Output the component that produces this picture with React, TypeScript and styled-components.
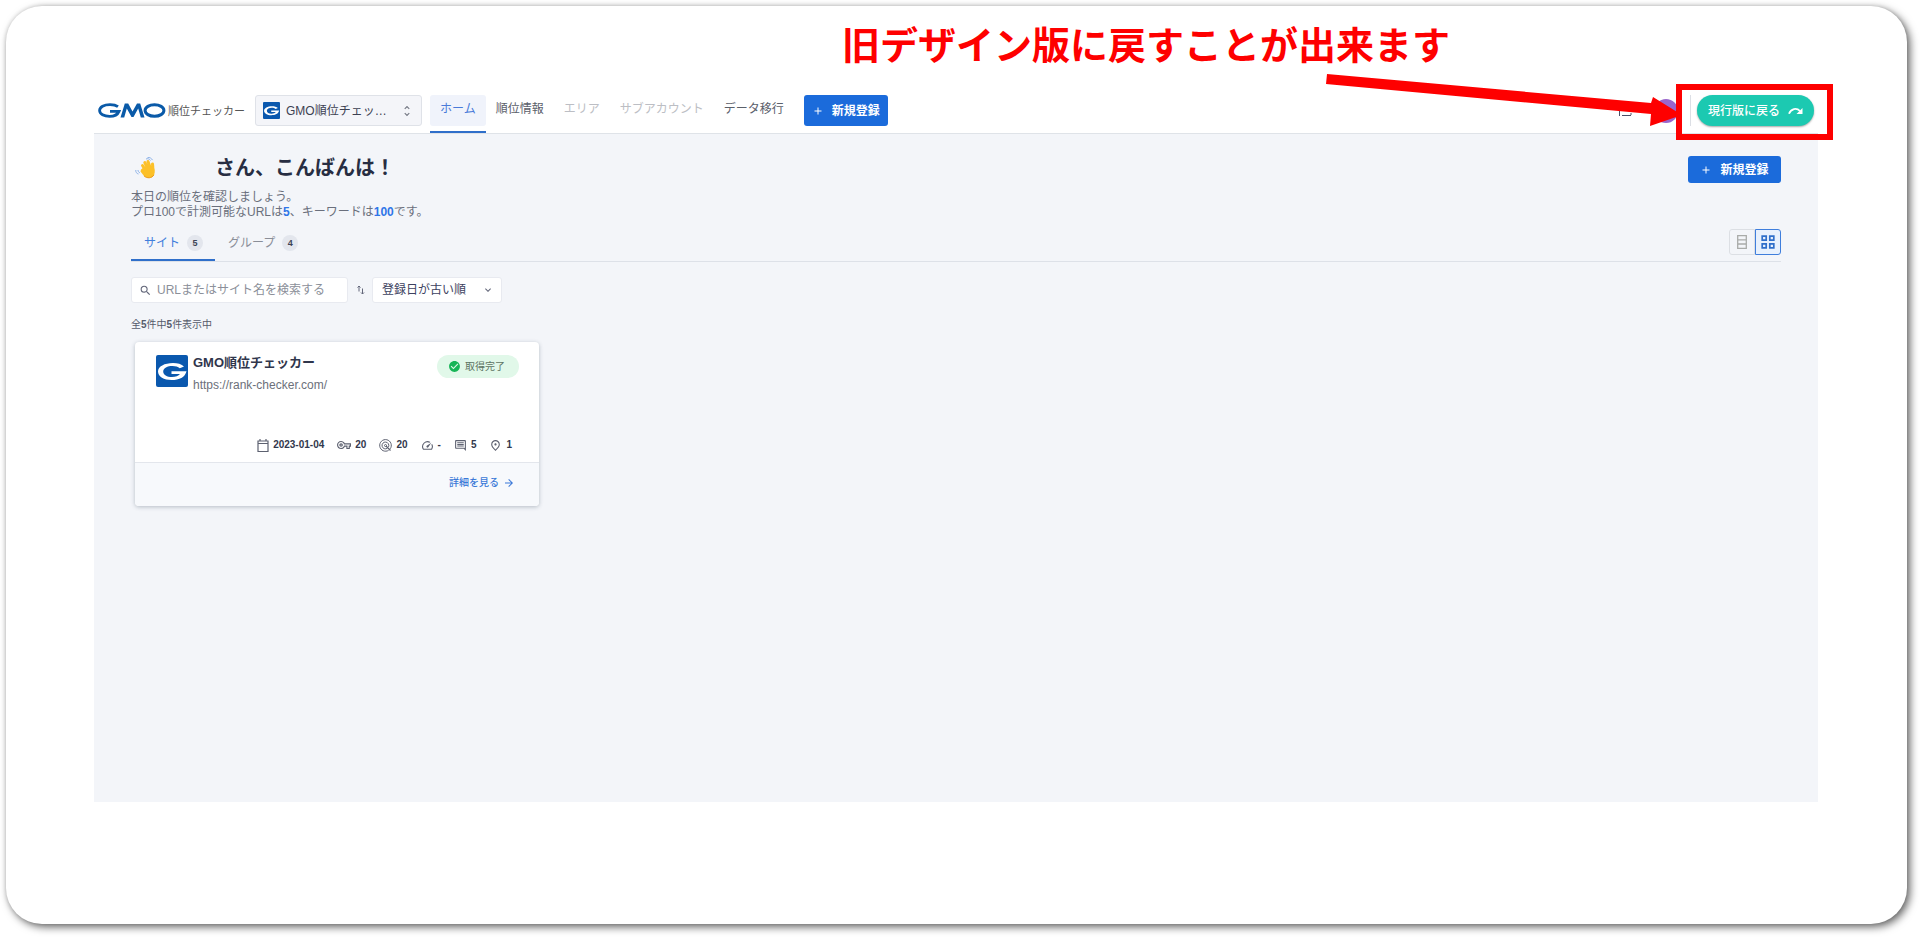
import React from "react";
import styled, { createGlobalStyle } from "styled-components";
import {
  MdSearch, MdUnfoldMore, MdOutlineVpnKey, MdOutlineSpeed, MdOutlineComment, MdOutlinePlace,
  MdExpandMore, MdArrowForward, MdAdd, MdCheckCircle,
} from "react-icons/md";

const Global = createGlobalStyle`
  *, *::before, *::after { box-sizing: border-box; }
  body {
    margin: 0;
    background: #fff;
    color: #2b3147;
    font: 12px/16px "Liberation Sans", "Noto Sans CJK JP", sans-serif;
  }
  button, input, select { font: inherit; }
  h1, h2, p, ul { margin: 0; padding: 0; }
  a { text-decoration: none; color: inherit; }
`;

const Slide = styled.div`
  display: flex;
  flex-direction: column;
  min-height: calc(100vh - 20px);
  margin: 6px 13px 14px 6px;
  padding: 0 89px 122px 88px;
  border-radius: 36px;
  background: #fff;
  box-shadow: 3px 3px 8px rgba(0, 0, 0, 0.6), 0 0 4px rgba(0, 0, 0, 0.12);
  overflow: hidden;
`;

const Caption = styled.p`
  margin: 12px 0 20px 748px;
  color: #fe0000;
  font-size: 38px;
  line-height: 56px;
  font-weight: 700;
  white-space: nowrap;
`;

const Header = styled.header`
  display: flex;
  align-items: flex-start;
  height: 40px;
  padding: 1px 4px 0;
  border-bottom: 1px solid #dfe3e8;
`;

const Brand = styled.a`
  display: flex;
  align-items: center;
  flex: none;
  gap: 2px;
  height: 31px;
  width: 149px;
  margin-right: 8px;
  color: #555;
  font-size: 11px;
  white-space: nowrap;
  svg { flex: none; }
`;

const SiteSelect = styled.button`
  display: flex;
  align-items: center;
  gap: 6px;
  width: 167px;
  height: 31px;
  margin-right: 8px;
  padding: 0 7px;
  border: 1px solid #dfe2e8;
  border-radius: 3px;
  background: #f4f5f9;
  color: #3c4152;
  svg:last-child { margin-left: auto; }
`;

const Nav = styled.nav`
  display: flex;
  align-self: stretch;
  margin-right: 10px;
`;

const NavLink = styled.a<{ $tone?: "active" | "muted" }>`
  height: 38px;
  border-bottom: 2px solid ${(p) => (p.$tone === "active" ? "#2f6fca" : "transparent")};
  white-space: nowrap;
  color: ${(p) => (p.$tone === "active" ? "#4a7bd9" : p.$tone === "muted" ? "#bcbec4" : "#5b606a")};

  span {
    display: block;
    height: 31px;
    padding: 6px 10px;
    border-radius: 3px;
    background: ${(p) => (p.$tone === "active" ? "#f0f3fb" : "transparent")};
  }
`;

const PrimaryButton = styled.button<{ $wide?: boolean }>`
  display: flex;
  align-items: center;
  justify-content: center;
  gap: 8px;
  flex: none;
  width: ${(p) => (p.$wide ? 93 : 84)}px;
  height: ${(p) => (p.$wide ? 27 : 31)}px;
  padding: 0;
  border: 0;
  border-radius: 3px;
  background: #1b6bdb;
  color: #fff;
  font-weight: 700;
`;

const Account = styled.div`
  display: flex;
  align-items: center;
  gap: 20px;
  height: 31px;
  margin-left: auto;
  color: #4b5068;
`;

const Avatar = styled.span`
  width: 24px;
  height: 24px;
  border-radius: 50%;
  background: #9966cc;
`;

const ReturnArea = styled.div`
  position: relative;
  margin-left: 12px;
  padding-left: 6px;
  border-left: 1px solid #dcdfe5;
`;

const ReturnButton = styled.button`
  display: flex;
  align-items: center;
  justify-content: center;
  gap: 8px;
  width: 117px;
  height: 31px;
  padding: 0;
  border: 0;
  border-radius: 16px;
  background: #1cc9b1;
  color: #fff;
  font-weight: 500;
  box-shadow: 0 1px 2px rgba(0, 0, 0, 0.35);
`;

const Highlight = styled.div`
  position: absolute;
  inset: -11px -19px -14px -15px;
  border: 6px solid #fe0000;
  pointer-events: none;
`;

const Pointer = styled.svg`
  position: absolute;
  right: 132px;
  top: -23px;
  pointer-events: none;
`;

const Main = styled.main`
  flex: 1;
  padding: 22px 37px 40px;
  background: #f3f5f9;
`;

const Intro = styled.div`
  display: flex;
  justify-content: space-between;
  align-items: flex-start;
`;

const Greeting = styled.h1`
  display: flex;
  align-items: center;
  gap: 58px;
  height: 24px;
  margin-bottom: 10px;
  padding-left: 4px;
  color: #272d42;
  font-size: 20px;
  line-height: 24px;
`;

const Lead = styled.p`
  color: #6a6f7c;
  line-height: 15px;
  b { color: #2f76e8; }
`;

const TabBar = styled.div`
  display: flex;
  align-items: flex-end;
  justify-content: space-between;
  height: 42px;
  margin-bottom: 15px;
  border-bottom: 1px solid #dde1e8;
`;

const Tabs = styled.div`
  display: flex;
  align-self: stretch;
  align-items: flex-end;
`;

const Tab = styled.button<{ $active?: boolean }>`
  display: flex;
  align-items: center;
  gap: 7px;
  height: 34px;
  padding: 0 12px 0 13px;
  border: 0;
  border-bottom: 2px solid ${(p) => (p.$active ? "#2f6fca" : "transparent")};
  background: none;
  color: ${(p) => (p.$active ? "#3f7edc" : "#8a8e98")};
`;

const Count = styled.span`
  width: 16px;
  border-radius: 8px;
  background: #e3e6ed;
  color: #3d4354;
  font-size: 9px;
  font-weight: 700;
  text-align: center;
`;

const Toggle = styled.div`
  display: flex;
  margin-bottom: 6px;
`;

const ToggleButton = styled.button<{ $active?: boolean }>`
  display: grid;
  place-items: center;
  width: 26px;
  height: 26px;
  padding: 0;
  border: 1px solid ${(p) => (p.$active ? "#3f7edc" : "#dcdfe4")};
  border-radius: ${(p) => (p.$active ? "0 3px 3px 0" : "3px 0 0 3px")};
  background: ${(p) => (p.$active ? "#e8f1fd" : "transparent")};
  color: ${(p) => (p.$active ? "#2f6fca" : "#a9aba9")};
`;

const Filters = styled.form`
  display: flex;
  align-items: center;
  margin-bottom: 14px;
  color: #63677a;
`;

const Field = styled.label<{ $width: number }>`
  display: flex;
  align-items: center;
  gap: 5px;
  width: ${(p) => p.$width}px;
  height: 26px;
  padding: 0 7px;
  border: 1px solid #e8eaf0;
  border-radius: 3px;
  background: #fff;
  svg { flex: none; }
`;

const SearchInput = styled.input`
  flex: 1;
  min-width: 0;
  padding: 0;
  border: 0;
  outline: 0;
  background: none;
  &::placeholder { color: #8b8f99; opacity: 1; }
`;

const SortIcon = styled.svg`
  margin: 0 7px 0 9px;
`;

const SortSelect = styled.select`
  flex: 1;
  min-width: 0;
  border: 0;
  padding: 0 2px;
  appearance: none;
  background: none;
  color: #3c4160;
`;

const Total = styled.p`
  margin-bottom: 9px;
  color: #565b6b;
  font-size: 10px;
`;

const Card = styled.article`
  width: 404px;
  margin-left: 4px;
  border-radius: 4px;
  background: #fff;
  box-shadow: 0 1px 4px rgba(40, 60, 80, 0.3);
  overflow: hidden;
`;

const CardHead = styled.div`
  display: flex;
  align-items: flex-start;
  gap: 5px;
  height: 94px;
  padding: 13px 20px 0 21px;
`;

const SiteName = styled.h2`
  margin-bottom: 6px;
  color: #30364c;
  font-size: 13px;
  line-height: 16px;
  font-weight: 600;
`;

const SiteUrl = styled.a`
  display: block;
  color: #6c707a;
`;

const Status = styled.span`
  display: flex;
  align-items: center;
  gap: 4px;
  width: 82px;
  height: 23px;
  margin-left: auto;
  padding-left: 11px;
  border-radius: 12px;
  background: #e1f8e9;
  color: #5d7464;
  font-size: 10px;
`;

const Stats = styled.ul`
  display: flex;
  justify-content: flex-end;
  gap: 13px;
  height: 26px;
  padding-right: 27px;
  color: #32384c;
  font-size: 10px;
  font-weight: 700;
  list-style: none;
`;

const Stat = styled.li`
  display: flex;
  align-items: center;
  gap: 4px;
  height: 18px;
  svg { color: #5d6170; }
`;

const CardFoot = styled.footer`
  display: flex;
  justify-content: flex-end;
  height: 44px;
  padding: 12px 24px 0 0;
  border-top: 1px solid #e3e6ec;
  background: #f7f9fc;
`;

const DetailLink = styled.a`
  display: flex;
  align-items: center;
  gap: 4px;
  height: 16px;
  color: #3b79d8;
  font-size: 10px;
  font-weight: 500;
`;

const GmoLogo = () => (
  <svg width="68" height="15" viewBox="0 0 68 15" fill="none" stroke="#0a5aa8" aria-label="GMO" role="img">
    <path d="M20 3.7C18 2.2 15 1.6 12 1.6 6 1.6 1.6 4 1.6 7.5s4.400 5.900 10 5.900c4.500 0 8-1.600 9.400-5H12" strokeWidth="2.800" />
    <path d="M22.500 14.500 26.800.5h3.400L34.500 8.600 39 .5h3.200l4.300 14h-3.700L40.200 5.600 35.500 14h-2L28.800 5.600 26.200 14.500z" fill="#0a5aa8" stroke="none" />
    <ellipse cx="56.500" cy="7.500" rx="9.400" ry="5.800" strokeWidth="3" />
  </svg>
);

const SiteIcon = ({ size }: { size: number }) => (
  <svg width={size} height={size} viewBox="0 0 32 32" aria-hidden="true">
    <rect width="32" height="32" rx="2" fill="#0a58ae" />
    <path
      d="M28 11.500C25.500 9 21.500 8 17 8 8.500 8 2 11.500 2 16.500S8 25 15.500 25c8 0 13.500-2.800 15-8.800H15.500v2.800h8.500c-1.500 2-4.500 3-8 3-5 0-8.800-2-8.800-5.500s4.300-5.500 9.300-5.500c3 0 5.500.7 7.300 2.200z"
      fill="#fff"
    />
  </svg>
);

const WavingHand = () => (
  <svg width="22" height="22" viewBox="0 0 22 22" aria-hidden="true">
    <g stroke="#fcc028" strokeWidth="3" strokeLinecap="round">
      <path d="M7.500 8.500 11 14M9.800 5.500 13 12M13 4.500l2.500 7M17.800 10l-.3-3" />
    </g>
    <path d="M6 12.500 9 10l9.800-1c.9 3 1.600 5.700.2 8.700-2 3.800-7 4.200-10 1.200L5.500 14.500z" fill="#fcc028" />
    <path d="M9 18.800c3 3 8 2.500 10-1" stroke="#eb9b1e" fill="none" />
    <path d="M11 2c1.500-.8 3.500 0 4.500 1.500M12.500.6c2-.5 4 .6 5 2.500M.8 13c-.3 2 .7 3.500 2.700 4M3 13c0 1.500.6 2.300 2 2.800" stroke="#8fb3e8" fill="none" />
  </svg>
);

const CalendarIcon = () => (
  <svg width="12" height="13" viewBox="0 0 12 13" fill="none" stroke="currentColor" aria-hidden="true">
    <path d="M1 2h10v10.500H1zM1 4.500h10M3 0v2M9 0v2" strokeWidth="1.200" />
  </svg>
);

const TargetIcon = () => (
  <svg width="13" height="13" viewBox="0 0 13 13" fill="none" stroke="currentColor" aria-hidden="true">
    <path d="M9.600 11.300a5.800 5.800 0 1 1 1.600-1.500" />
    <path d="M8.300 9.300a3.400 3.400 0 1 1 1.200-1.400" />
    <circle cx="6.500" cy="6.500" r="1" />
    <path d="m7 7 4.500 4.500" strokeWidth="1.300" />
  </svg>
);

const ReturnIcon = () => (
  <svg width="15" height="8" viewBox="0 0 15 8" fill="none" aria-hidden="true">
    <path d="M1 6.800C3 1.500 8.500.3 12 4" stroke="#fff" strokeWidth="1.800" />
    <path d="M14.500 1v6H8.500z" fill="#fff" />
  </svg>
);

const App = () => (
  <>
    <Global />
    <Slide>
      <Caption>旧デザイン版に戻すことが出来ます</Caption>
      <Header>
        <Brand href="#">
          <GmoLogo />
          順位チェッカー
        </Brand>
        <SiteSelect type="button">
          <SiteIcon size={17} />
          GMO順位チェッ…
          <MdUnfoldMore size={14} color="#777b86" />
        </SiteSelect>
        <Nav>
          <NavLink href="#" $tone="active"><span>ホーム</span></NavLink>
          <NavLink href="#"><span>順位情報</span></NavLink>
          <NavLink href="#" $tone="muted"><span>エリア</span></NavLink>
          <NavLink href="#" $tone="muted"><span>サブアカウント</span></NavLink>
          <NavLink href="#"><span>データ移行</span></NavLink>
        </Nav>
        <PrimaryButton type="button">
          <MdAdd size={12} />
          新規登録
        </PrimaryButton>
        <Account>
          <svg width="16" height="12" viewBox="0 0 16 12" fill="none" stroke="currentColor" aria-hidden="true">
            <path d="M1.500 2v9M4 10.500h9M13 8v2" />
          </svg>
          <Avatar />
        </Account>
        <ReturnArea>
          <ReturnButton type="button">
            現行版に戻る
            <ReturnIcon />
          </ReturnButton>
          <Highlight />
          <Pointer width="356" height="60" viewBox="0 0 356 60" fill="#fe0000" aria-hidden="true">
            <path d="M1 2 325 31 327 25 356 43 324 54 325 42 0 12z" />
          </Pointer>
        </ReturnArea>
      </Header>
      <Main>
        <Intro>
          <div>
            <Greeting>
              <WavingHand />
              さん、こんばんは！
            </Greeting>
            <Lead>
              本日の順位を確認しましょう。
              <br />
              プロ100で計測可能なURLは<b>5</b>、キーワードは<b>100</b>です。
            </Lead>
          </div>
          <PrimaryButton type="button" $wide>
            <MdAdd size={12} />
            新規登録
          </PrimaryButton>
        </Intro>
        <TabBar>
          <Tabs role="tablist">
            <Tab type="button" role="tab" aria-selected="true" $active>
              サイト <Count>5</Count>
            </Tab>
            <Tab type="button" role="tab" aria-selected="false">
              グループ <Count>4</Count>
            </Tab>
          </Tabs>
          <Toggle>
            <ToggleButton type="button" aria-label="リスト表示">
              <svg width="10" height="14" viewBox="0 0 10 14" fill="none" stroke="currentColor" strokeWidth="1.300">
                <path d="M.7.7h8.600v12.600H.7zM.7 4.800h8.600M.7 9h8.600" />
              </svg>
            </ToggleButton>
            <ToggleButton type="button" aria-label="カード表示" $active>
              <svg width="14" height="14" viewBox="0 0 14 14" fill="none" stroke="currentColor" strokeWidth="1.700">
                <path d="M1.200 1.200h4v4h-4zM8.800 1.200h4v4h-4zM1.200 8.800h4v4h-4zM8.800 8.800h4v4h-4z" />
              </svg>
            </ToggleButton>
          </Toggle>
        </TabBar>
        <Filters>
          <Field $width={217}>
            <MdSearch size={13} />
            <SearchInput type="text" aria-label="サイト検索" placeholder="URLまたはサイト名を検索する" />
          </Field>
          <SortIcon width="8" height="10" viewBox="0 0 8 10" fill="none" stroke="currentColor" aria-hidden="true">
            <path d="M2 6.500V1M.5 2.500 2 1l1.500 1.500M5.500 3.500V9M4 7.500 5.500 9 7 7.500" />
          </SortIcon>
          <Field $width={130}>
            <SortSelect aria-label="並び替え">
              <option>登録日が古い順</option>
            </SortSelect>
            <MdExpandMore size={12} />
          </Field>
        </Filters>
        <Total>
          全<b>5</b>件中<b>5</b>件表示中
        </Total>
        <Card>
          <CardHead>
            <SiteIcon size={32} />
            <div>
              <SiteName>GMO順位チェッカー</SiteName>
              <SiteUrl href="#">https://rank-checker.com/</SiteUrl>
            </div>
            <Status>
              <MdCheckCircle size={13} color="#17b557" />
              取得完了
            </Status>
          </CardHead>
          <Stats>
            <Stat><CalendarIcon />2023-01-04</Stat>
            <Stat><MdOutlineVpnKey size={14} />20</Stat>
            <Stat><TargetIcon />20</Stat>
            <Stat><MdOutlineSpeed size={13} />-</Stat>
            <Stat><MdOutlineComment size={13} />5</Stat>
            <Stat><MdOutlinePlace size={13} />1</Stat>
          </Stats>
          <CardFoot>
            <DetailLink href="#">
              詳細を見る
              <MdArrowForward size={12} />
            </DetailLink>
          </CardFoot>
        </Card>
      </Main>
    </Slide>
  </>
);

export default App;
